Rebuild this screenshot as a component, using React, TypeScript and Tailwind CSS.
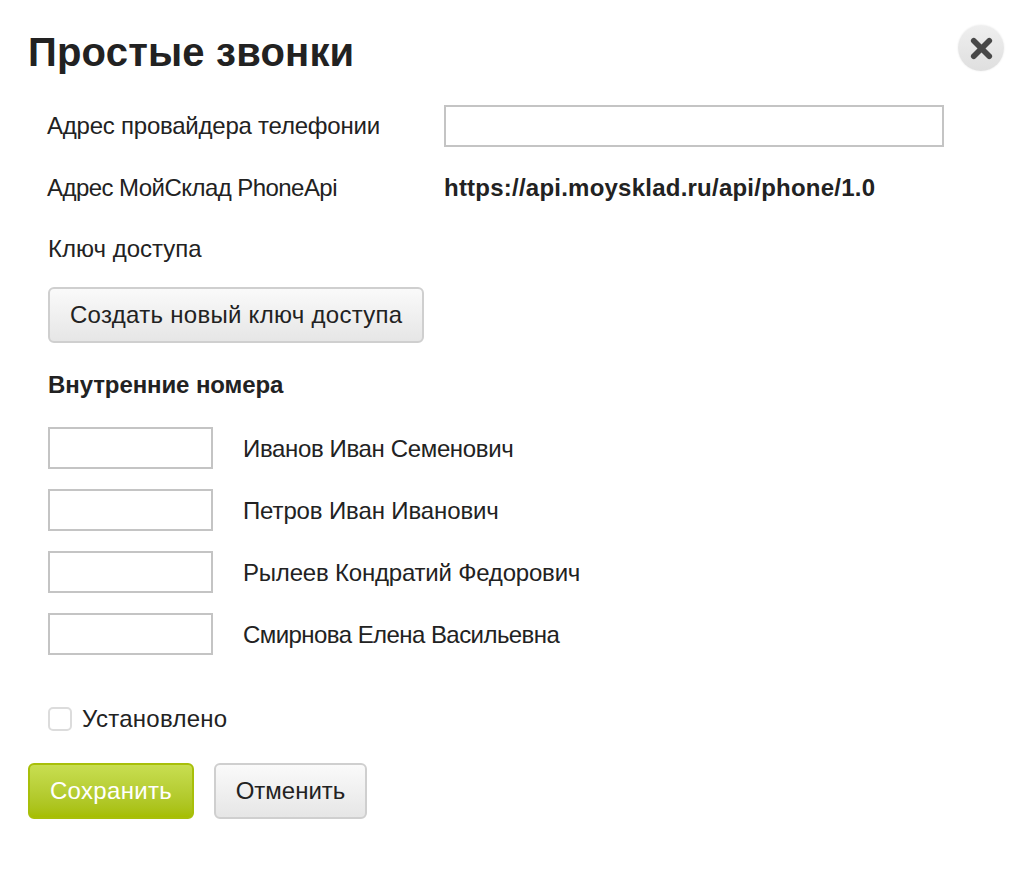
import { X } from 'lucide-react';

const employees = [
  { name: 'Иванов Иван Семенович', tracking: 'tracking-[-0.36px]' },
  { name: 'Петров Иван Иванович', tracking: 'tracking-[-0.13px]' },
  { name: 'Рылеев Кондратий Федорович', tracking: 'tracking-[-0.2px]' },
  { name: 'Смирнова Елена Васильевна', tracking: 'tracking-[-0.56px]' },
];

const App = () => {
  return (
    <div className="w-[1020px] h-[872px] bg-white text-[#222] overflow-hidden font-['Liberation_Sans',Arial,sans-serif] text-[24px] leading-[28px] pl-[28px] pt-[28px]">
      <div className="flex justify-between pr-[16px]">
        <h1 className="mt-[1px] text-[40px] leading-[46px] font-bold tracking-[0.2px]">Простые звонки</h1>
        <button className="-mt-[3px] w-[46px] h-[46px] rounded-full bg-gradient-to-b from-[#efefef] to-[#dfdfdf] flex items-center justify-center shadow-[0_0_2px_rgba(0,0,0,0.1)]">
          <X size={31} strokeWidth={4.4} className="text-[#484848]" />
        </button>
      </div>

      <div className="pl-[20px] pr-[48px]">
        <div className="mt-[30px] flex items-center h-[42px]">
          <label className="w-[396px] -ml-[1px] mr-[1px] tracking-[-0.23px]">Адрес провайдера телефонии</label>
          <input className="w-[500px] h-[42px] border-2 border-[#c4c4c4] bg-white" />
        </div>
        <div className="mt-[27px] flex items-center h-[28px]">
          <span className="w-[396px] -ml-[1px] mr-[1px] tracking-[-0.55px]">Адрес МойСклад PhoneApi</span>
          <b className="tracking-[0.23px]">https://api.moysklad.ru/api/phone/1.0</b>
        </div>
        <div className="mt-[33px] h-[28px]">Ключ доступа</div>
        <button className="mt-[24px] h-[56px] px-[20px] rounded-[6px] border-2 border-[#cfcfcf] bg-gradient-to-b from-[#fafafa] to-[#e6e6e6] tracking-[0.29px]">
          Создать новый ключ доступа
        </button>
        <div className="mt-[28px] font-bold tracking-[-0.1px]">Внутренние номера</div>
        <div className="mt-[28px] flex flex-col gap-[20px]">
          {employees.map((employee) => (
            <div key={employee.name} className="flex items-center">
              <input className="w-[165px] h-[42px] border-2 border-[#c4c4c4] bg-white" />
              <span className={`ml-[30px] mt-[2px] ${employee.tracking}`}>{employee.name}</span>
            </div>
          ))}
        </div>
        <label className="mt-[50px] flex items-center">
          <span className="w-[24px] h-[24px] rounded-[5px] border-2 border-[#dcdcdc] bg-white" />
          <span className="ml-[10px] tracking-[0.27px]">Установлено</span>
        </label>
      </div>

      <div className="mt-[30px] flex gap-[20px]">
        <button className="w-[166px] h-[56px] rounded-[6px] border-2 border-[#a8bf0a] bg-gradient-to-b from-[#c8de50] to-[#a6be00] text-white tracking-[0.33px]">
          Сохранить
        </button>
        <button className="w-[153px] h-[56px] rounded-[6px] border-2 border-[#cfcfcf] bg-gradient-to-b from-[#fafafa] to-[#e6e6e6]">
          Отменить
        </button>
      </div>
    </div>
  );
};

export default App;
